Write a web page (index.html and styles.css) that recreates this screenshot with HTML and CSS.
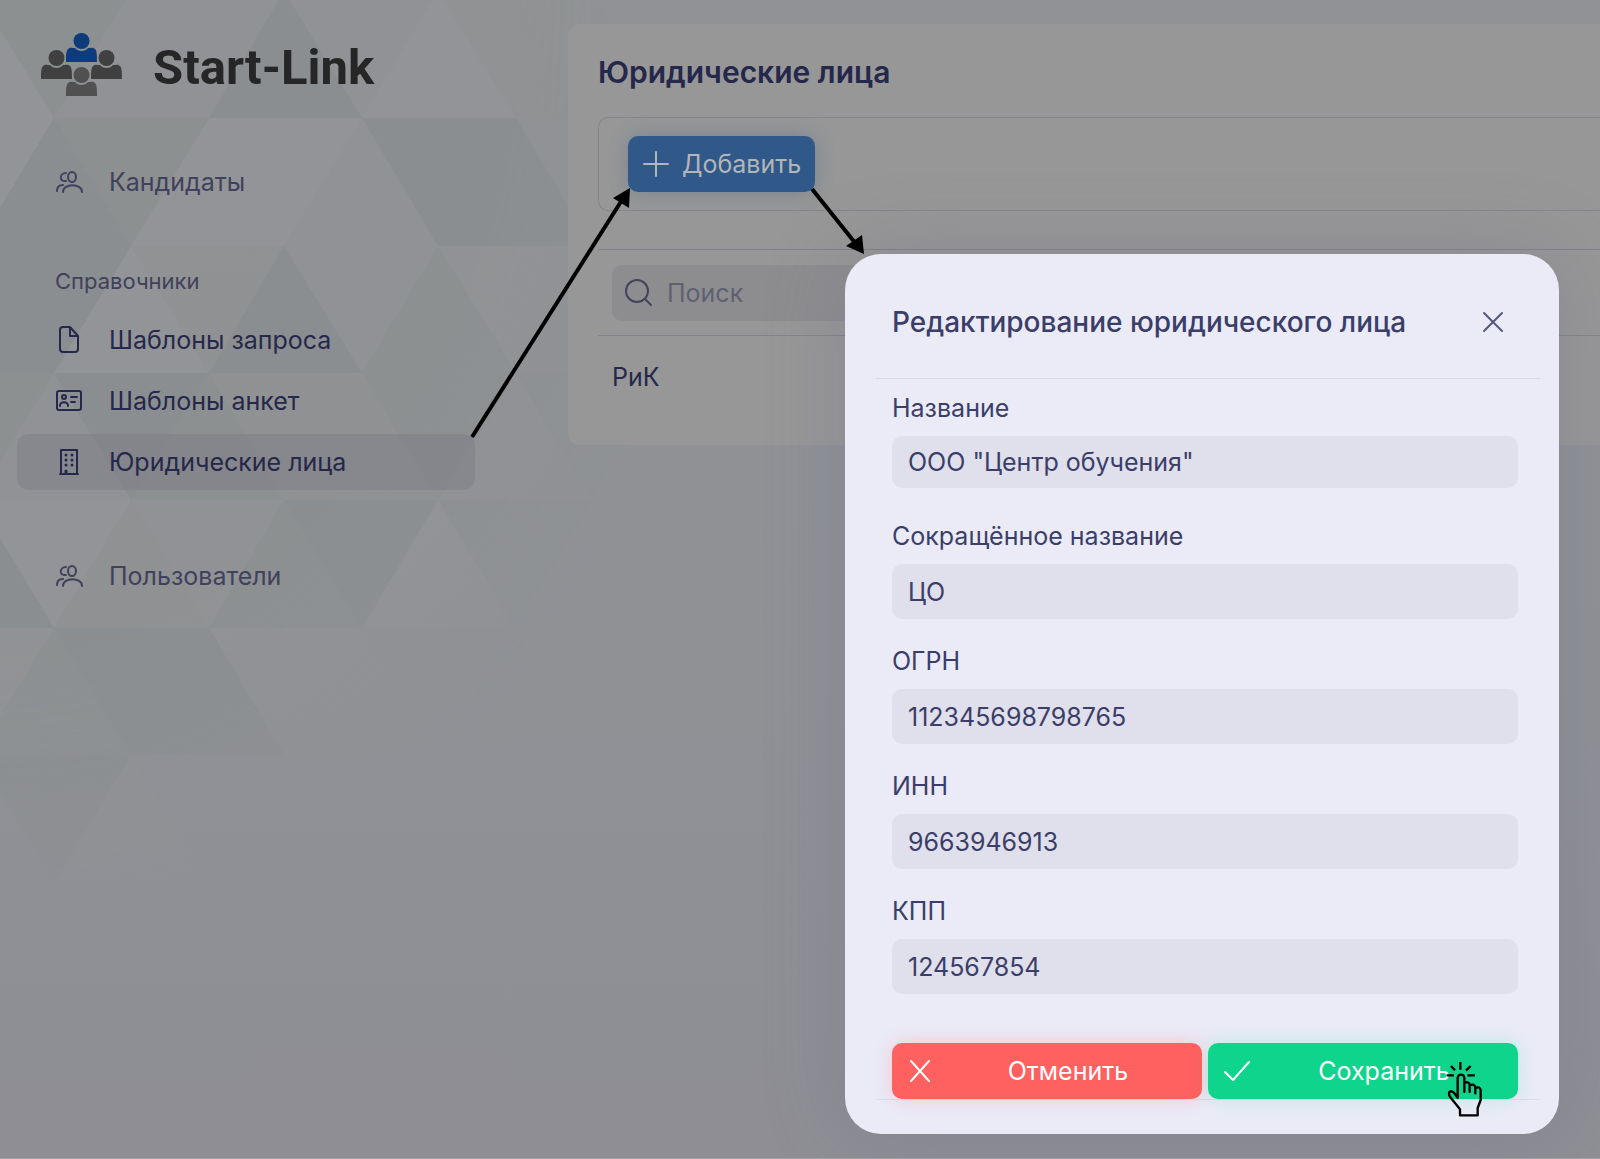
FILE: index.html
```html
<!DOCTYPE html>
<html lang="ru">
<head>
    <meta charset="UTF-8">
    <meta name="viewport" content="width=device-width, initial-scale=1.0">
    <title>Start-Link</title>
    <link rel="stylesheet" href="styles.css">
</head>
<body>
    <svg class="pattern" width="760" height="890" aria-hidden="true">
        <g fill="#949598">
            <path d="M-23 -9L54 118H-100ZM54 118L-23 246L-100 118ZM438 -9L516 118H362Z"/>
            <path d="M209 118L131 246H284ZM209 118H362L284 246ZM131 246L54 373H209Z"/>
            <path d="M438 500L362 628H516ZM-23 500H131L54 628Z"/>
        </g>
        <g fill="#929395">
            <path d="M131 -9L54 118H209ZM131 -9H284L209 118ZM284 -9H438L362 118ZM362 118L284 246H438Z"/>
            <path d="M284 246H438L362 373ZM438 246H592L516 373ZM54 373L-23 500H131ZM516 373L438 500H592Z"/>
            <path d="M131 500H284L209 628ZM-100 628H54L-23 755ZM209 628H362L284 755ZM362 628L284 755H438Z"/>
            <path d="M131 755L54 882H209Z"/>
        </g>
        <g fill="#909293">
            <path d="M438 -9H592L516 118ZM592 -9L516 118H670ZM131 246H284L209 373ZM209 373H362L284 500Z"/>
            <path d="M362 373L284 500H438ZM131 500L54 628H209ZM592 500L516 628H670ZM362 628H516L438 755Z"/>
        </g>
        <g fill="#8d9091">
            <path d="M-23 -9H131L54 118ZM54 118H209L131 246ZM438 246L362 373H516ZM-100 373H54L-23 500Z"/>
            <path d="M362 373H516L438 500ZM516 373H670L592 500ZM209 373L131 500H284ZM284 500L209 628H362Z"/>
            <path d="M438 500H592L516 628ZM54 628L-23 755H131ZM516 628L438 755H592Z"/>
        </g>
        <g fill="#8b8e90">
            <path d="M284 -9L209 118H362ZM54 118L-23 246H131ZM362 118H516L438 246ZM516 118L438 246H592Z"/>
            <path d="M-23 246H131L54 373ZM-23 246L-100 373H54ZM284 246L209 373H362ZM54 373H209L131 500Z"/>
            <path d="M-23 500L-100 628H54ZM284 500H438L362 628ZM54 628H209L131 755ZM209 628L131 755H284ZM-23 755H131L54 882Z"/>
        </g>
    </svg>

    <div class="page">
        <aside class="sidebar">
            <a class="logo" href="#">
                <svg width="82" height="63" viewBox="0 0 82 63" aria-hidden="true">
                    <defs>
                        <g id="person">
                            <circle cx="15.500" cy="8" r="8"/>
                            <path d="M0 29C0 23 0 18 2 16C4 14 7 15 9 15C12 19 19 19 22 15C24 15 27 14 29 16C31 18 31 23 31 29Z"/>
                        </g>
                    </defs>
                    <use href="#person" x="25" y="0" fill="#0d3b7c"/>
                    <use href="#person" x="0" y="17" fill="#404040"/>
                    <use href="#person" x="50" y="17" fill="#404040"/>
                    <use href="#person" x="25" y="34" fill="#505050"/>
                </svg>
                <span>Start-Link</span>
            </a>

            <nav class="menu">
                <a class="menu-item muted" href="#">
                    <svg class="icon" viewBox="0 0 28 28"><ellipse cx="17" cy="9" rx="4" ry="5"/><path d="M11 5C4 5 4 14 11 13M8 24C8 15 27 15 27 24M2 23C2 19 4 17 8 17"/></svg>
                    Кандидаты
                </a>
                <div class="menu-title">Справочники</div>
                <a class="menu-item" href="#">
                    <svg class="icon" viewBox="0 0 28 28"><path d="M15 1H8Q5 1 5 4V23Q5 26 8 26H20Q23 26 23 23V10ZM15 1V10H23"/></svg>
                    Шаблоны запроса
                </a>
                <a class="menu-item" href="#">
                    <svg class="icon" viewBox="0 0 28 28"><rect x="2" y="4" width="24" height="19" rx="2"/><circle cx="9" cy="10" r="2"/><path d="M5 19C4 14 14 14 13 19M16 10H22M16 15H20"/></svg>
                    Шаблоны анкет
                </a>
                <a class="menu-item active" href="#">
                    <svg class="icon" viewBox="0 0 28 28"><path d="M5 26H23M6 26V2H22V26"/><path d="M11 7h0M17 7h0M11 12h0M17 12h0M11 17h0M17 17h0M11 23v2" stroke-width="3"/></svg>
                    Юридические лица
                </a>
                <a class="menu-item muted last" href="#">
                    <svg class="icon" viewBox="0 0 28 28"><ellipse cx="17" cy="9" rx="4" ry="5"/><path d="M11 5C4 5 4 14 11 13M8 24C8 15 27 15 27 24M2 23C2 19 4 17 8 17"/></svg>
                    Пользователи
                </a>
            </nav>
        </aside>

        <main class="content">
            <h1>Юридические лица</h1>
            <div class="toolbar">
                <button type="button" class="btn btn-add">
                    <svg class="icon" viewBox="0 0 28 28"><path d="M14 2V26M2 14H26"/></svg>
                    Добавить
                </button>
            </div>
            <table class="list">
                <thead>
                    <tr>
                        <th>
                            <label class="search">
                                <svg class="icon" viewBox="0 0 28 28"><circle cx="12" cy="12" r="11"/><path d="M20 20L26 26"/></svg>
                                <input type="text" placeholder="Поиск" aria-label="Поиск">
                            </label>
                        </th>
                    </tr>
                </thead>
                <tbody>
                    <tr><td>РиК</td></tr>
                </tbody>
            </table>
        </main>
    </div>

    <div class="overlay">
        <form class="modal" role="dialog" aria-labelledby="modalTitle">
            <header class="modal-header">
                <h2 id="modalTitle">Редактирование юридического лица</h2>
                <button type="button" class="close" aria-label="Закрыть">
                    <svg class="icon" viewBox="0 0 28 28"><path d="M5 5L23 23M23 5L5 23"/></svg>
                </button>
            </header>
            <div class="modal-body">
                <div class="field">
                    <label for="name">Название</label>
                    <input type="text" id="name" value="ООО &quot;Центр обучения&quot;">
                </div>
                <div class="field">
                    <label for="shortName">Сокращённое название</label>
                    <input type="text" id="shortName" value="ЦО">
                </div>
                <div class="field">
                    <label for="ogrn">ОГРН</label>
                    <input type="text" id="ogrn" value="112345698798765">
                </div>
                <div class="field">
                    <label for="inn">ИНН</label>
                    <input type="text" id="inn" value="9663946913">
                </div>
                <div class="field">
                    <label for="kpp">КПП</label>
                    <input type="text" id="kpp" value="124567854">
                </div>
            </div>
            <footer class="modal-footer">
                <button type="button" class="btn btn-cancel">
                    <svg class="icon" viewBox="0 0 28 28"><path d="M5 4L23 24M23 4L5 24"/></svg>
                    <span>Отменить</span>
                </button>
                <button type="submit" class="btn btn-save">
                    <svg class="icon" viewBox="0 0 28 28"><path d="M3 15L11 23L27 5"/></svg>
                    <span>Сохранить</span>
                </button>
                <svg class="pointer" viewBox="138 95 108 168" aria-hidden="true">
                    <path d="M173 206V146Q174 136 183 136Q192 136 193 146V188V160Q207 156 209 166V188V168Q224 162 226 174V192V176Q240 170 242 182V212L233 236V258H180V240L151 204Q143 190 151 186Q160 183 173 206Z"/>
                    <path d="M181 98V121M153 110L165 123M212 110L198 124M140 138H162M202 138H225" fill="none"/>
                </svg>
            </footer>
        </form>
    </div>

    <svg class="arrows" width="900" height="460" aria-hidden="true">
        <path d="M472 437L622 200M812 189L856 244" stroke="#000" stroke-width="4"/>
        <path d="M630 188L613 198L629 208ZM864 254L846 246L862 235Z"/>
    </svg>
</body>
</html>
```
FILE: styles.css
```css
* {
    box-sizing: border-box;
}
body {
    margin: 0;
    min-height: 100vh;
    font-family: Inter, "Open Sans", sans-serif;
    font-size: 25px;
    line-height: 32px;
    color: #25284a;
    background: linear-gradient(#909296, #8f9195 60%, #8e8e94);
}
button, input {
    font: inherit;
    color: inherit;
    border: none;
}
button {
    cursor: pointer;
}
a {
    color: inherit;
    text-decoration: none;
}
.icon {
    flex: none;
    width: 28px;
    height: 28px;
    fill: none;
    stroke: currentColor;
    stroke-width: 2;
    stroke-linecap: round;
    stroke-linejoin: round;
}
.pattern {
    position: absolute;
    top: 0;
    left: 0;
    opacity: 0.9;
    -webkit-mask-image: radial-gradient(ellipse 800px 1000px at 0 0, #000 65%, transparent 95%);
    mask-image: radial-gradient(ellipse 800px 1000px at 0 0, #000 65%, transparent 95%);
}
.page {
    position: relative;
    display: flex;
    align-items: flex-start;
    min-height: 100vh;
    padding-top: 24px;
    border-bottom: 1px solid #a2a2a6;
}

/* Sidebar */
.sidebar {
    flex: none;
    width: 568px;
    padding: 8px 93px 0 17px;
}
.logo {
    display: flex;
    align-items: flex-end;
    gap: 30px;
    height: 64px;
    padding-left: 24px;
    font-family: Roboto, sans-serif;
    font-size: 49px;
    line-height: 56px;
    font-weight: 700;
    color: #262626;
}
.menu {
    display: flex;
    flex-direction: column;
    gap: 5px;
    margin-top: 58px;
}
.menu-item {
    display: flex;
    align-items: center;
    gap: 26px;
    height: 56px;
    padding-left: 38px;
    border-radius: 12px;
}
.menu-item.active {
    background: rgba(118, 118, 130, 0.35);
}
.muted, .menu-title {
    color: #40415b;
}
.menu-title {
    margin-top: 50px;
    padding-left: 38px;
    font-size: 22px;
}
.menu-title + .menu-item {
    margin-top: 10px;
}
.menu-item.last {
    margin-top: 53px;
}

/* Content */
.content {
    flex: 1;
    height: 421px;
    padding: 28px 0 0 30px;
    background: #979797;
    border-radius: 12px 0 0 12px;
}
h1 {
    margin: 0;
    font-size: 30px;
    line-height: 40px;
    font-weight: 600;
}
.toolbar {
    margin-top: 25px;
    padding: 18px 29px;
    border: 1px solid #85858d;
    border-right: none;
    border-radius: 10px 0 0 10px;
}
.btn {
    display: flex;
    align-items: center;
    height: 56px;
    padding: 0 14px;
    border-radius: 10px;
}
.btn-add {
    gap: 12px;
    color: #b2b5b9;
    background: #30598a;
    box-shadow: 0 0 20px rgba(48, 89, 138, 0.3);
}
.list {
    width: 100%;
    margin-top: 38px;
    border-collapse: collapse;
    border-top: 1px solid #82828c;
}
.list th {
    padding: 15px 14px 14px;
    border-bottom: 1px solid #82828c;
    font-weight: 400;
}
.list td {
    padding: 25px 14px;
}
.search {
    display: flex;
    align-items: center;
    gap: 14px;
    width: 50%;
    height: 56px;
    padding: 0 13px;
    color: #43445c;
    background: #8d8d8f;
    border-radius: 10px;
}
.search input {
    flex: 1;
    min-width: 0;
    padding: 0;
    background: none;
}
.search input::placeholder {
    color: #5f6072;
}

/* Modal */
.overlay {
    position: absolute;
    inset: 0;
    display: flex;
    justify-content: flex-end;
    align-items: flex-start;
    padding: 254px 41px 0 0;
}
.modal {
    width: 714px;
    padding: 0 19px 34px 31px;
    color: #3a3e68;
    background: #ebebf8;
    border-radius: 36px;
    box-shadow: 0 0 80px rgba(110, 105, 135, 0.3);
}
.modal-header {
    display: flex;
    align-items: center;
    justify-content: space-between;
    height: 125px;
    padding: 12px 33px 0 16px;
    border-bottom: 1px solid #d8d8e4;
}
h2 {
    margin: 0;
    font-size: 28px;
    font-weight: 500;
}
.close {
    display: flex;
    padding: 0;
    color: #545880;
    background: none;
}
.modal-body {
    padding: 13px 22px 23px 16px;
}
.field {
    display: flex;
    flex-direction: column;
    gap: 12px;
    margin-bottom: 26px;
}
.field input {
    height: 55px;
    padding: 0 16px;
    background: #e0dfec;
    border-radius: 10px;
}
.field:first-child {
    margin-bottom: 32px;
}
.field:first-child input {
    height: 52px;
}
.modal-footer {
    position: relative;
    display: flex;
    gap: 6px;
    padding: 0 22px 0 16px;
    border-bottom: 1px solid #dedee9;
}
.modal-footer .btn {
    flex: 1;
    color: #fff;
}
.modal-footer .btn span {
    flex: 1;
    padding-left: 14px;
    text-align: center;
}
.btn-cancel {
    background: #ff6060;
    box-shadow: 0 0 20px rgba(255, 96, 96, 0.25);
}
.btn-save {
    background: #0fd48b;
    box-shadow: 0 0 20px rgba(15, 212, 139, 0.2);
}
.pointer {
    position: absolute;
    top: 18px;
    right: 58px;
    width: 36px;
    height: 56px;
    fill: none;
    stroke: #000;
    stroke-width: 7;
    stroke-linejoin: round;
}

/* Step arrows */
.arrows {
    position: absolute;
    top: 0;
    left: 0;
    pointer-events: none;
}
```
